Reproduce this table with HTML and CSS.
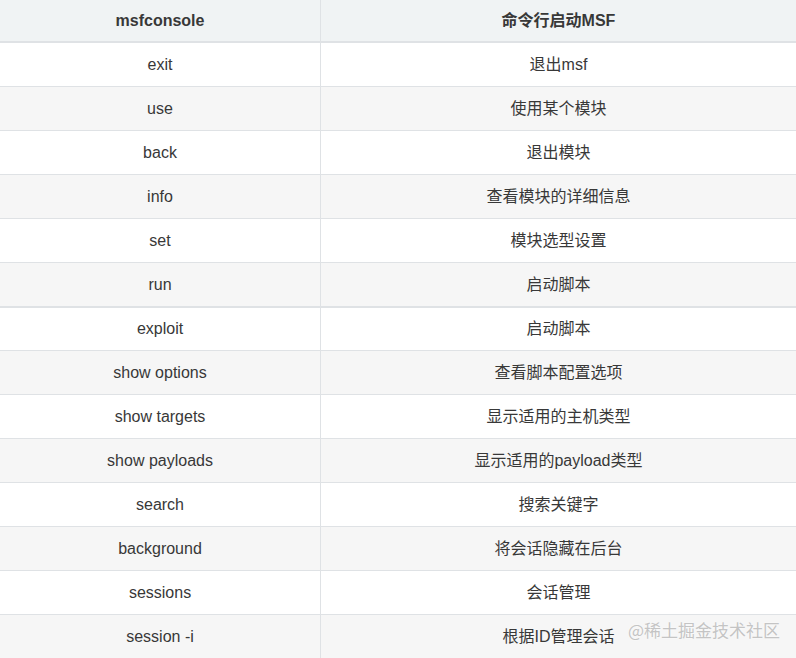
FILE: index.html
```html
<!DOCTYPE html>
<html lang="zh">
<head>
<meta charset="utf-8">
<link rel="stylesheet" href="styles.css">
</head>
<body>
<div class="wrap">
<table class="cmd">
<thead>
<tr><th class="c1">msfconsole</th><th class="c2">命令行启动MSF</th></tr>
</thead>
<tbody>
<tr><td>exit</td><td>退出msf</td></tr>
<tr><td>use</td><td>使用某个模块</td></tr>
<tr><td>back</td><td>退出模块</td></tr>
<tr><td>info</td><td>查看模块的详细信息</td></tr>
<tr><td>set</td><td>模块选型设置</td></tr>
<tr><td>run</td><td>启动脚本</td></tr>
<tr class="split"><td>exploit</td><td>启动脚本</td></tr>
<tr><td>show options</td><td>查看脚本配置选项</td></tr>
<tr><td>show targets</td><td>显示适用的主机类型</td></tr>
<tr><td>show payloads</td><td>显示适用的payload类型</td></tr>
<tr><td>search</td><td>搜索关键字</td></tr>
<tr><td>background</td><td>将会话隐藏在后台</td></tr>
<tr><td>sessions</td><td>会话管理</td></tr>
<tr><td>session -i</td><td>根据ID管理会话</td></tr>
</tbody>
</table>
<div class="mark">@稀土掘金技术社区</div>
</div>
</body>
</html>
```
FILE: styles.css
```css
html, body {
  margin: 0;
  padding: 0;
  background: #fff;
}
.wrap {
  position: relative;
  width: 796px;
  height: 658px;
  overflow: hidden;
}
.cmd {
  width: 796px;
  border-collapse: collapse;
  font-family: "Liberation Sans", Arial, "Noto Sans CJK SC", sans-serif;
  font-size: 16px;
  line-height: 18px;
  color: #383838;
}
.cmd th, .cmd td {
  text-align: center;
  padding: 0;
  border-bottom: 1px solid #dfe2e5;
  border-right: 1px solid #dfe2e5;
}
.cmd th:last-child, .cmd td:last-child {
  border-right: none;
}
.cmd th {
  height: 41px;
  background: #f0f3f4;
  font-weight: bold;
  border-bottom: 2px solid #dfe2e5;
}
.cmd .c1 {
  width: 320px;
}
.cmd td {
  height: 43px;
}
.cmd tbody tr:nth-child(even) td {
  background: #f6f6f6;
}
.cmd tr.split td {
  height: 42px;
  border-top: 2px solid #dfe2e5;
}
.mark {
  position: absolute;
  left: 628px;
  top: 618px;
  font-family: "Noto Sans CJK SC", sans-serif;
  font-size: 17px;
  line-height: 24px;
  color: #c4c4c4;
  text-shadow: 0 0 2px #fff;
}
```
